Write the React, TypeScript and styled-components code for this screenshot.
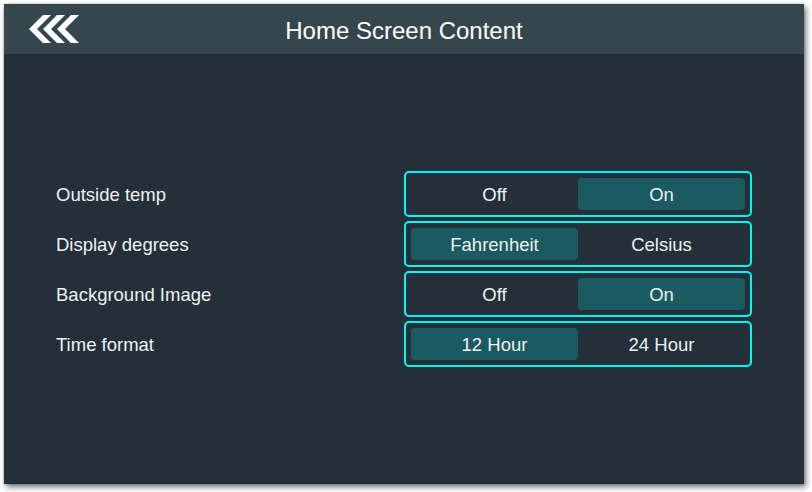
import { useState } from 'react';
import styled, { createGlobalStyle } from 'styled-components';

const GlobalStyle = createGlobalStyle`
  html, body {
    margin: 0;
    padding: 0;
    background: #ffffff;
  }
  body {
    font-family: "Liberation Sans", Arial, sans-serif;
  }
`;

interface Setting {
  label: string;
  options: [string, string];
  value: number;
}

const initialSettings: Setting[] = [
  { label: 'Outside temp', options: ['Off', 'On'], value: 1 },
  { label: 'Display degrees', options: ['Fahrenheit', 'Celsius'], value: 0 },
  { label: 'Background Image', options: ['Off', 'On'], value: 1 },
  { label: 'Time format', options: ['12 Hour', '24 Hour'], value: 0 },
];

const BackChevrons = () => (
  <svg width="52" height="30" viewBox="0 0 52 30" fill="#ffffff">
    {[0, 14, 28].map((x) => (
      <polygon
        key={x}
        points={`${x},14 ${x + 14},0 ${x + 22},0 ${x + 8},14 ${x + 22},28 ${x + 14},28`}
      />
    ))}
  </svg>
);

const App = () => {
  const [settings, setSettings] = useState(initialSettings);

  // 선택 변경
  const select = (row: number, idx: number) => {
    setSettings((prev) => prev.map((s, i) => (i === row ? { ...s, value: idx } : s)));
  };

  return (
    <Page>
      <GlobalStyle />
      <Window>
        <Header>
          <BackButton aria-label="Back">
            <BackChevrons />
          </BackButton>
          <Title>Home Screen Content</Title>
        </Header>
        <Body>
          <SettingsList>
            {settings.map((s, row) => (
              <Row key={s.label}>
                <Label>{s.label}</Label>
                <Segmented>
                  {s.options.map((opt, idx) => (
                    <Segment key={opt} $active={s.value === idx} onClick={() => select(row, idx)}>
                      {opt}
                    </Segment>
                  ))}
                </Segmented>
              </Row>
            ))}
          </SettingsList>
        </Body>
      </Window>
    </Page>
  );
};

const Page = styled.div`
  width: 812px;
  height: 492px;
  padding: 4px;
  box-sizing: border-box;
`;

const Window = styled.div`
  width: 800px;
  height: 480px;
  display: flex;
  flex-direction: column;
  background: #23303a;
  box-shadow: 2px 3px 6px rgba(0, 0, 0, 0.55), 0 0 2px rgba(0, 0, 0, 0.25);
`;

const Header = styled.div`
  position: relative;
  height: 50px;
  flex-shrink: 0;
  background: #35474d;
  display: flex;
  align-items: center;
  justify-content: center;
`;

const BackButton = styled.button`
  position: absolute;
  left: 25px;
  top: 11px;
  padding: 0;
  border: none;
  background: none;
  cursor: pointer;
  display: flex;

  svg {
    display: block;
  }
`;

const Title = styled.div`
  color: #ffffff;
  font-size: 24px;
  line-height: 1;
  margin-top: 4px;
`;

const Body = styled.div`
  flex: 1;
  display: flex;
  align-items: center;
  padding: 0 52px;
`;

const SettingsList = styled.div`
  width: 100%;
  display: flex;
  flex-direction: column;
  gap: 4px;
`;

const Row = styled.div`
  display: flex;
  align-items: center;
  justify-content: space-between;
`;

const Label = styled.div`
  color: #f0f0f0;
  font-size: 18.5px;
  padding-top: 2px;
`;

const Segmented = styled.div`
  width: 348px;
  height: 46px;
  box-sizing: border-box;
  border: 2px solid #00f8f8;
  border-radius: 5px;
  padding: 5px;
  display: grid;
  grid-template-columns: 1fr 1fr;
`;

const Segment = styled.button<{ $active: boolean }>`
  border: none;
  border-radius: 4px;
  background: ${(p) => (p.$active ? '#1a5a61' : 'transparent')};
  color: #f0f0f0;
  font-family: "Liberation Sans", Arial, sans-serif;
  font-size: 18.5px;
  padding: 2px 0 0;
  cursor: pointer;
`;

export default App;
